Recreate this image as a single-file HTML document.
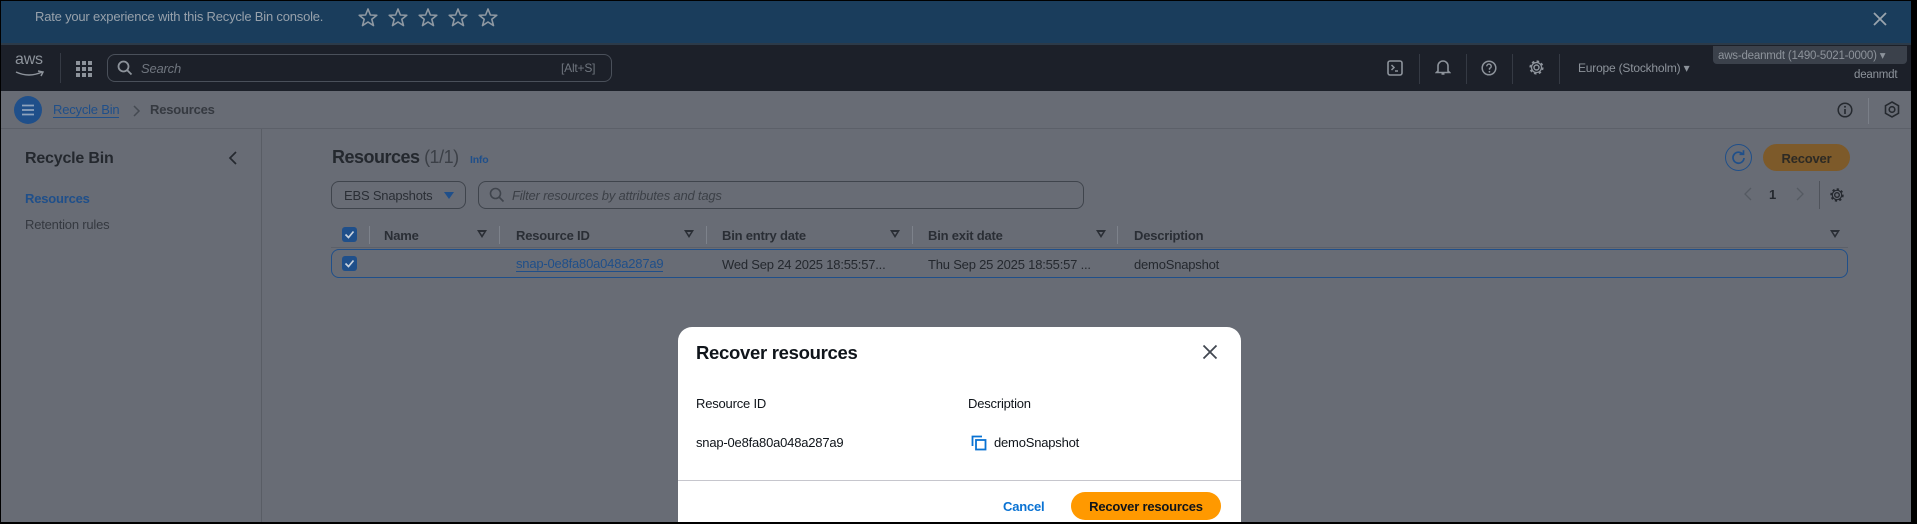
<!DOCTYPE html>
<html><head><meta charset="utf-8">
<style>
*{box-sizing:border-box;margin:0;padding:0}
body{width:1917px;height:524px;overflow:hidden;background:#000;font-family:"Liberation Sans",sans-serif;position:relative;letter-spacing:-0.2px}
.a{position:absolute}
.t{white-space:nowrap}
#page{position:absolute;left:1px;top:1px;width:1910px;height:521px;background:#686c75;overflow:hidden}
.hd{font-weight:bold;color:#2a2e35;font-size:13px}
.sep{position:absolute;width:1px;height:18px;background:#7d828b;top:225px}
.fi{position:absolute;top:229px;width:0;height:0;border-left:5px solid transparent;border-right:5px solid transparent;border-top:8px solid #2a2e35}
.fi:after{content:"";position:absolute;left:-2px;top:-6px;border-left:2px solid transparent;border-right:2px solid transparent;border-top:3px solid #686c75}
.cb{position:absolute;width:15px;height:15px;background:#1f4f8a;border-radius:3px}
.cb svg{position:absolute;left:2px;top:2px}
</style></head><body>
<div id="page">
<div class="a" style="left:0;top:0;width:1910px;height:43px;background:#1a3d5c"></div>
<div class="a t" style="left:34px;top:8px;font-size:13px;color:#97a1ab">Rate your experience with this Recycle Bin console.</div>
<svg class="a" style="left:357px;top:6px" width="140" height="22" viewBox="0 0 140 22">
<g fill="none" stroke="#8e98a2" stroke-width="1.6" stroke-linejoin="round">
<path id="s" d="M10 2 L12.4 8 L18.8 8.3 L13.8 12.3 L15.5 18.6 L10 15 L4.5 18.6 L6.2 12.3 L1.2 8.3 L7.6 8 Z"/>
<use href="#s" x="30"/><use href="#s" x="60"/><use href="#s" x="90"/><use href="#s" x="120"/>
</g></svg>
<svg class="a" style="left:1871px;top:10px" width="16" height="16"><path d="M2 2L14 14M14 2L2 14" stroke="#9aa4ae" stroke-width="1.8"/></svg>
<div class="a" style="left:0;top:42px;width:1910px;height:2px;background:#2c3a48"></div>
<div class="a" style="left:0;top:44px;width:1910px;height:46px;background:#1c2029"></div>
<div class="a t" style="left:14px;top:50px;font-size:16px;color:#8d939b">aws</div>
<svg class="a" style="left:14px;top:69px" width="30" height="8"><path d="M1 2 Q14 8 27 2 M23 1 L28 2 L26 6" fill="none" stroke="#8d939b" stroke-width="1.5"/></svg>
<div class="a" style="left:59px;top:52px;width:1px;height:30px;background:#353a44"></div>
<svg class="a" style="left:75px;top:60px" width="16" height="16" fill="#8d939b">
<rect x="0" y="0" width="4" height="4"/><rect x="6" y="0" width="4" height="4"/><rect x="12" y="0" width="4" height="4"/>
<rect x="0" y="6" width="4" height="4"/><rect x="6" y="6" width="4" height="4"/><rect x="12" y="6" width="4" height="4"/>
<rect x="0" y="12" width="4" height="4"/><rect x="6" y="12" width="4" height="4"/><rect x="12" y="12" width="4" height="4"/></svg>
<div class="a" style="left:106px;top:53px;width:505px;height:28px;border:1px solid #4a505a;border-radius:8px"></div>
<svg class="a" style="left:116px;top:59px" width="16" height="16"><circle cx="6.5" cy="6.5" r="5" fill="none" stroke="#8d939b" stroke-width="1.8"/><path d="M10 10L14.5 14.5" stroke="#8d939b" stroke-width="1.8"/></svg>
<div class="a t" style="left:140px;top:60px;font-size:13px;font-style:italic;color:#6f757e">Search</div>
<div class="a t" style="left:560px;top:60px;font-size:12px;color:#6f757e">[Alt+S]</div>
<svg class="a" style="left:1386px;top:59px" width="16" height="16"><rect x="1" y="1" width="14" height="14" rx="2" fill="none" stroke="#8d939b" stroke-width="1.6"/><path d="M4.5 5L7 7.5L4.5 10M8 11H11" fill="none" stroke="#8d939b" stroke-width="1.5"/></svg>
<div class="a" style="left:1418px;top:53px;width:1px;height:30px;background:#353a44"></div>
<svg class="a" style="left:1434px;top:58px" width="16" height="17"><path d="M3 12V7a5 5 0 0 1 10 0v5l1.5 1.5h-13z M6.5 15h3" fill="none" stroke="#8d939b" stroke-width="1.6"/></svg>
<div class="a" style="left:1465px;top:53px;width:1px;height:30px;background:#353a44"></div>
<svg class="a" style="left:1480px;top:59px" width="16" height="16"><circle cx="8" cy="8" r="6.8" fill="none" stroke="#8d939b" stroke-width="1.5"/><path d="M5.8 6.3a2.2 2.2 0 1 1 2.7 2.1v1.3" fill="none" stroke="#8d939b" stroke-width="1.4"/><circle cx="8.4" cy="11.8" r="0.9" fill="#8d939b"/></svg>
<div class="a" style="left:1511px;top:53px;width:1px;height:30px;background:#353a44"></div>
<svg class="a" style="left:1527px;top:58px" width="17" height="17"><circle cx="8.5" cy="8.5" r="2.5" fill="none" stroke="#8d939b" stroke-width="1.5"/><circle cx="8.5" cy="8.5" r="6" fill="none" stroke="#8d939b" stroke-width="2.2" stroke-dasharray="2.4 2.3"/><circle cx="8.5" cy="8.5" r="5" fill="none" stroke="#8d939b" stroke-width="1.3"/></svg>
<div class="a" style="left:1558px;top:53px;width:1px;height:30px;background:#353a44"></div>
<div class="a t" style="left:1577px;top:60px;font-size:12px;color:#8d939b">Europe (Stockholm) ▾</div>
<div class="a" style="left:1712px;top:45px;width:194px;height:18px;background:#3b414b;border-radius:0 0 4px 4px"></div>
<div class="a t" style="left:1717px;top:47px;font-size:11.5px;color:#8d939b">aws-deanmdt (1490-5021-0000) ▾</div>
<div class="a t" style="left:1853px;top:68px;font-size:11.5px;color:#8d939b">deanmdt</div>
<div class="a" style="left:0;top:90px;width:1910px;height:37px;background:#686c75"></div>
<div class="a" style="left:0;top:127px;width:1910px;height:1px;background:#5c6069"></div>
<div class="a" style="left:13px;top:95px;width:28px;height:28px;border-radius:50%;background:#1f4f8a"></div>
<svg class="a" style="left:20px;top:102px" width="14" height="14"><path d="M1 2.5H13M1 7H13M1 11.5H13" stroke="#8ea3bd" stroke-width="1.8"/></svg>
<div class="a t" style="left:52px;top:101px;font-size:13px;color:#1f4f8a;border-bottom:1px solid #1f4f8a;line-height:15px">Recycle Bin</div>
<svg class="a" style="left:131px;top:104px" width="10" height="12"><path d="M2 1L7 6L2 11" fill="none" stroke="#454a52" stroke-width="1.5"/></svg>
<div class="a t" style="left:149px;top:101px;font-size:13px;font-weight:bold;color:#353940">Resources</div>
<svg class="a" style="left:1836px;top:101px" width="16" height="16"><circle cx="8" cy="8" r="6.8" fill="none" stroke="#25292f" stroke-width="1.5"/><path d="M8 7V12" stroke="#25292f" stroke-width="1.6"/><circle cx="8" cy="4.7" r="1" fill="#25292f"/></svg>
<div class="a" style="left:1867px;top:97px;width:1px;height:26px;background:#7a7f88"></div>
<svg class="a" style="left:1883px;top:100px" width="16" height="18"><path d="M8 1L14.5 4.7V12.3L8 16L1.5 12.3V4.7Z" fill="none" stroke="#25292f" stroke-width="1.6"/><circle cx="8" cy="8.5" r="2.8" fill="none" stroke="#25292f" stroke-width="1.6"/></svg>
<div class="a" style="left:260px;top:128px;width:1px;height:400px;background:#595d65"></div>
<div class="a t" style="left:24px;top:149px;font-size:16px;font-weight:bold;color:#24282e">Recycle Bin</div>
<svg class="a" style="left:227px;top:150px" width="10" height="14"><path d="M8 1L2 7L8 13" fill="none" stroke="#25292f" stroke-width="1.7"/></svg>
<div class="a t" style="left:24px;top:190px;font-size:13px;font-weight:bold;color:#1f4f8a">Resources</div>
<div class="a t" style="left:24px;top:216px;font-size:13px;color:#353940">Retention rules</div>
<div class="a t" style="left:331px;top:146px;font-size:18px;font-weight:bold;color:#24282e;letter-spacing:-0.5px">Resources <span style="font-weight:normal;color:#3c4047">(1/1)</span></div>
<div class="a t" style="left:469px;top:153px;font-size:10.5px;font-weight:bold;color:#1f4f8a">Info</div>
<div class="a" style="left:1724px;top:143px;width:27px;height:27px;border:1.5px solid #1f4f8a;border-radius:50%"></div>
<svg class="a" style="left:1729px;top:148px" width="17" height="17"><path d="M13 5.5A5.5 5.5 0 1 0 14 9" fill="none" stroke="#1f4f8a" stroke-width="1.7"/><path d="M9.5 5.3H13.5V1.3" fill="none" stroke="#1f4f8a" stroke-width="1.7"/></svg>
<div class="a" style="left:1762px;top:143px;width:87px;height:27px;background:#7d5a2a;border-radius:14px"></div>
<div class="a t" style="left:1762px;top:150px;width:87px;text-align:center;font-size:13px;font-weight:bold;color:#2d2a24">Recover</div>
<div class="a" style="left:330px;top:180px;width:135px;height:28px;border:1px solid #3f444c;border-radius:8px"></div>
<div class="a t" style="left:343px;top:187px;font-size:13px;color:#2a2e35">EBS Snapshots</div>
<div class="a" style="left:443px;top:191px;border-left:5px solid transparent;border-right:5px solid transparent;border-top:7px solid #1f4f8a"></div>
<div class="a" style="left:477px;top:180px;width:606px;height:28px;border:1px solid #3f444c;border-radius:8px"></div>
<svg class="a" style="left:488px;top:186px" width="16" height="16"><circle cx="6.5" cy="6.5" r="5" fill="none" stroke="#3f444c" stroke-width="1.6"/><path d="M10 10L14.5 14.5" stroke="#3f444c" stroke-width="1.6"/></svg>
<div class="a t" style="left:511px;top:187px;font-size:13px;font-style:italic;color:#3c4047">Filter resources by attributes and tags</div>
<svg class="a" style="left:1742px;top:186px" width="10" height="14"><path d="M8 1L2 7L8 13" fill="none" stroke="#555a62" stroke-width="1.3"/></svg>
<div class="a t" style="left:1768px;top:186px;font-size:13px;font-weight:bold;color:#24282e">1</div>
<svg class="a" style="left:1794px;top:186px" width="10" height="14"><path d="M2 1L8 7L2 13" fill="none" stroke="#555a62" stroke-width="1.3"/></svg>
<div class="a" style="left:1818px;top:180px;width:1px;height:28px;background:#4f535b"></div>
<svg class="a" style="left:1828px;top:186px" width="16" height="16"><circle cx="8" cy="8" r="2.3" fill="none" stroke="#25292f" stroke-width="1.4"/><circle cx="8" cy="8" r="5.7" fill="none" stroke="#25292f" stroke-width="2" stroke-dasharray="2.2 2.2"/><circle cx="8" cy="8" r="4.7" fill="none" stroke="#25292f" stroke-width="1.2"/></svg>
<div class="cb" style="left:341px;top:226px"><svg width="11" height="11"><path d="M1.5 5.5L4.5 8.5L9.5 2.5" fill="none" stroke="#c9d3de" stroke-width="1.7"/></svg></div>
<div class="sep" style="left:368px"></div>
<div class="a t hd" style="left:383px;top:227px">Name</div>
<div class="fi" style="left:476px"></div>
<div class="sep" style="left:498px"></div>
<div class="a t hd" style="left:515px;top:227px">Resource ID</div>
<div class="fi" style="left:683px"></div>
<div class="sep" style="left:705px"></div>
<div class="a t hd" style="left:721px;top:227px">Bin entry date</div>
<div class="fi" style="left:889px"></div>
<div class="sep" style="left:911px"></div>
<div class="a t hd" style="left:927px;top:227px">Bin exit date</div>
<div class="fi" style="left:1095px"></div>
<div class="sep" style="left:1116px"></div>
<div class="a t hd" style="left:1133px;top:227px">Description</div>
<div class="fi" style="left:1829px"></div>
<div class="a" style="left:330px;top:246px;width:1517px;height:1px;background:#5c6069"></div>
<div class="a" style="left:330px;top:248px;width:1517px;height:29px;border:1.5px solid #1f4f8a;border-radius:8px"></div>
<div class="cb" style="left:341px;top:255px"><svg width="11" height="11"><path d="M1.5 5.5L4.5 8.5L9.5 2.5" fill="none" stroke="#c9d3de" stroke-width="1.7"/></svg></div>
<div class="a t" style="left:515px;top:255px;font-size:13px;color:#1f4f8a;border-bottom:1px solid #1f4f8a;line-height:15px">snap-0e8fa80a048a287a9</div>
<div class="a t" style="left:721px;top:256px;font-size:13px;color:#24282e">Wed Sep 24 2025 18:55:57...</div>
<div class="a t" style="left:927px;top:256px;font-size:13px;color:#24282e">Thu Sep 25 2025 18:55:57 ...</div>
<div class="a t" style="left:1133px;top:256px;font-size:13px;color:#24282e">demoSnapshot</div>
<div class="a" style="left:677px;top:326px;width:563px;height:220px;background:#fff;border-radius:14px"></div>
<div class="a t" style="left:695px;top:341px;font-size:18.5px;font-weight:bold;color:#0f141a;letter-spacing:-0.3px">Recover resources</div>
<svg class="a" style="left:1201px;top:343px" width="16" height="16"><path d="M1.5 1.5L14.5 14.5M14.5 1.5L1.5 14.5" stroke="#414750" stroke-width="1.8"/></svg>
<div class="a t" style="left:695px;top:395px;font-size:13px;color:#0f141a">Resource ID</div>
<div class="a t" style="left:967px;top:395px;font-size:13px;color:#0f141a">Description</div>
<div class="a t" style="left:695px;top:434px;font-size:13px;color:#0f141a">snap-0e8fa80a048a287a9</div>
<svg class="a" style="left:970px;top:434px" width="16" height="16"><path d="M1.5 11V1.5H11" fill="none" stroke="#0972d3" stroke-width="1.8"/><rect x="5" y="5" width="9.5" height="9.5" fill="none" stroke="#0972d3" stroke-width="1.8"/></svg>
<div class="a t" style="left:993px;top:434px;font-size:13px;color:#0f141a">demoSnapshot</div>
<div class="a" style="left:677px;top:479px;width:563px;height:1px;background:#c6c6cd"></div>
<div class="a t" style="left:1002px;top:498px;font-size:13px;font-weight:bold;color:#0972d3">Cancel</div>
<div class="a" style="left:1070px;top:491px;width:150px;height:28px;background:#ff9900;border-radius:14px"></div>
<div class="a t" style="left:1070px;top:498px;width:150px;text-align:center;font-size:13px;font-weight:bold;color:#0f141a">Recover resources</div>
</div>
</body></html>
